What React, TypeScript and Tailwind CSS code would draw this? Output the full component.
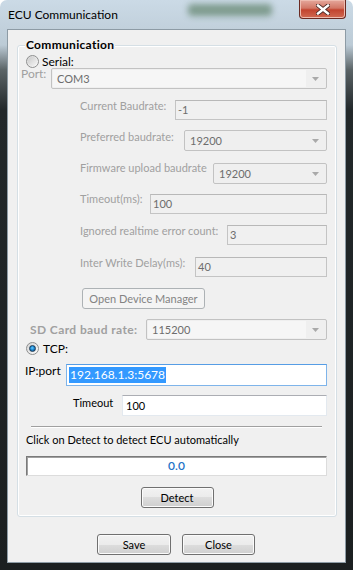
import clsx from 'clsx';

function Radio({ checked }: { checked?: boolean }) {
  return (
    <div className="flex h-[13px] w-[13px] shrink-0 items-center justify-center rounded-full border border-[#8e8f8f] bg-[linear-gradient(135deg,#d3d3d3_0%,#e9e9e9_50%,#fbfbfb_100%)]">
      {checked ? (
        <div className="h-[7px] w-[7px] rounded-full border border-[#1b3a55] bg-[radial-gradient(circle_at_45%_40%,#6cd0ff_0%,#1e8ad6_45%,#0b3f72_100%)]" />
      ) : (
        <div className="h-[9px] w-[9px] rounded-full bg-[linear-gradient(135deg,#c9c9c9_0%,#e4e4e4_60%,#f4f4f4_100%)]" />
      )}
    </div>
  );
}

function Arrow() {
  return (
    <svg width="7" height="4" viewBox="0 0 7 4">
      <polygon points="0,0 7,0 3.5,4" fill="#a9a9a9" />
    </svg>
  );
}

function Combo({ value, className, inner }: { value: string; className: string; inner?: boolean }) {
  return (
    <div className={clsx('flex h-[21px] shrink-0 rounded-[2px] border border-[#c2c2c2] bg-[#efefef] p-[1px]', className)}>
      <div className={clsx('flex flex-1 items-center pl-[4px] text-[#6d6d6d]', inner && 'bg-[#f6f6f6]')}>{value}</div>
      <div className="flex w-[19px] items-center justify-center">
        <Arrow />
      </div>
    </div>
  );
}

function Field({ value, className }: { value: string; className: string }) {
  return (
    <div className={clsx('flex h-[20px] shrink-0 items-center border border-[#c4c4c4] border-t-[#b8b8b8] bg-[#f0f0f0] pl-[2px] text-[#6d6d6d]', className)}>
      {value}
    </div>
  );
}

const btn =
  'flex h-[21px] items-center justify-center rounded-[3px] border border-[#707070] bg-[linear-gradient(180deg,#f2f2f2_0%,#ebebeb_50%,#dddddd_50%,#cfcfcf_100%)] text-black shadow-[inset_0_0_0_1px_#fbfbfb]';

const label = 'shrink-0 whitespace-nowrap text-[#a0a0a0]';

export default function App() {
  return (
    <div className="flex h-[570px] w-[353px] flex-col overflow-hidden rounded-t-[7px] bg-[linear-gradient(180deg,#cbdae6_0px,#bccbd6_45px,#5a6366_70px,#22282a_110px,#1b1f20_100%)] font-['Lato',sans-serif] text-[11px] leading-[16px]">
      {/* title bar */}
      <div className="relative flex h-[29px] shrink-0 items-start pl-[8px] pr-[7px]">
        <div className="absolute left-[188px] top-[4px] h-[12px] w-[84px] rounded-[4px] bg-[#4f7558] opacity-60 blur-[3px]" />
        <span className="relative mt-[7px] text-[12px] text-black">ECU Communication</span>
        <div className="relative ml-auto flex h-[19px] w-[47px] items-center justify-center rounded-b-[4px] border border-t-0 border-[#6b2a22] bg-[linear-gradient(180deg,#e5a89c_0%,#d27766_45%,#c2442f_55%,#d06a52_100%)] shadow-[inset_0_0_0_1px_#eebcb0]">
          <svg width="14" height="11" viewBox="0 0 14 11">
            <path d="M2 1.5 L12 9.5 M12 1.5 L2 9.5" stroke="#4a2a26" strokeWidth="4.2" strokeLinecap="square" />
            <path d="M2 1.5 L12 9.5 M12 1.5 L2 9.5" stroke="#ffffff" strokeWidth="2.4" strokeLinecap="square" />
          </svg>
        </div>
      </div>

      {/* client area */}
      <div className="mx-[7px] flex h-[534px] shrink-0 flex-col border border-[#8d9ba5] bg-[#f0f0f0]">
        <div className="relative ml-[9px] mt-[15px] flex w-[320px] flex-col rounded-[3px] border border-[#d5dfe5] pb-[8px] shadow-[inset_0_0_0_1px_#ffffff]">
          <span className="absolute -top-[9px] left-[7px] bg-[#f0f0f0] px-[1px] text-[12px] font-bold tracking-[0.3px] text-black">
            Communication
          </span>

          <div className="mt-[9px] flex h-[13px] items-center pl-[8px]">
            <Radio />
            <span className="ml-[3px] text-[12px] text-black">Serial:</span>
          </div>

          <div className="flex items-start pl-[3px] pr-[9px]">
            <span className={clsx(label, '-mt-[2px] text-[12px]')}>Port:</span>
            <Combo value="COM3" className="ml-auto w-[276px]" inner />
          </div>

          <div className="mt-[11px] flex items-start pl-[62px] pr-[9px]">
            <span className={clsx(label, '-mt-[2px]')}>Current Baudrate:</span>
            <Field value="-1" className="ml-auto w-[152px]" />
          </div>

          <div className="mt-[10px] flex items-start pl-[62px] pr-[9px]">
            <span className={clsx(label, '-mt-[1px]')}>Preferred baudrate:</span>
            <Combo value="19200" className="ml-auto w-[143px]" />
          </div>

          <div className="mt-[12px] flex items-start pl-[62px] pr-[9px]">
            <span className={clsx(label, '-mt-[3px]')}>Firmware upload baudrate</span>
            <Combo value="19200" className="ml-auto w-[114px]" />
          </div>

          <div className="mt-[10px] flex items-start pl-[62px] pr-[9px]">
            <span className={clsx(label, '-mt-[3px]')}>Timeout(ms):</span>
            <Field value="100" className="ml-auto w-[177px]" />
          </div>

          <div className="mt-[11px] flex items-start pl-[62px] pr-[9px]">
            <span className={clsx(label, '-mt-[2px]')}>Ignored realtime error count:</span>
            <Field value="3" className="ml-auto w-[100px]" />
          </div>

          <div className="mt-[12px] flex items-start pl-[62px] pr-[9px]">
            <span className={clsx(label, '-mt-[2px]')}>Inter Write Delay(ms):</span>
            <Field value="40" className="ml-auto w-[132px]" />
          </div>

          <div className="mt-[11px] flex pl-[64px]">
            <div className="flex h-[21px] w-[123px] items-center justify-center whitespace-nowrap rounded-[3px] border border-[#adb2b5] bg-[#f4f4f4] text-[#838383]">
              Open Device Manager
            </div>
          </div>

          <div className="mt-[10px] flex items-center pl-[12px] pr-[9px]">
            <span className={clsx(label, 'text-[12px] font-bold tracking-[0.4px]')}>SD Card baud rate:</span>
            <Combo value="115200" className="ml-auto w-[181px]" inner />
          </div>

          <div className="mt-[2px] flex h-[13px] items-center pl-[8px]">
            <Radio checked />
            <span className="ml-[4px] text-[12px] text-black">TCP:</span>
          </div>

          <div className="mt-[9px] flex items-start pl-[7px] pr-[9px]">
            <span className="-mt-[1px] shrink-0 whitespace-nowrap text-[12px] text-black">IP:port</span>
            <div className="ml-auto flex h-[22px] w-[261px] shrink-0 items-center border border-[#7eb4ea] border-t-[#569de5] bg-white pl-[2px] text-[12px]">
              <span className="bg-[#3399ff] px-[1px] text-white">192.168.1.3:5678</span>
            </div>
          </div>

          <div className="mt-[9px] flex items-start pl-[55px] pr-[9px]">
            <span className="shrink-0 whitespace-nowrap text-black">Timeout</span>
            <div className="ml-auto flex h-[21px] w-[205px] shrink-0 items-center border border-[#e3e9ef] border-t-[#abadb3] bg-white pl-[3px] text-black">
              100
            </div>
          </div>

          <div className="ml-[13px] mt-[10px] w-[291px] border-t border-b border-t-[#a0a0a0] border-b-white" />

          <div className="mt-[4px] whitespace-nowrap pl-[8px] text-black">Click on Detect to detect ECU automatically</div>

          <div className="ml-[8px] mt-[8px] flex h-[20px] w-[301px] items-center justify-center border border-[#dcdcdc] border-l-[#7a7a7a] border-t-[#7a7a7a] bg-white text-[12px] font-semibold text-[#1f74c8] shadow-[inset_1px_1px_0_#a0a0a0]">
            0.0
          </div>

          <div className="mt-[11px] flex justify-center">
            <div className={clsx(btn, 'w-[73px]')}>Detect</div>
          </div>
        </div>

        <div className="mt-[17px] flex justify-center gap-[11px] pr-[1px]">
          <div className={clsx(btn, 'w-[74px]')}>Save</div>
          <div className={clsx(btn, 'w-[73px]')}>Close</div>
        </div>
      </div>
    </div>
  );
}
